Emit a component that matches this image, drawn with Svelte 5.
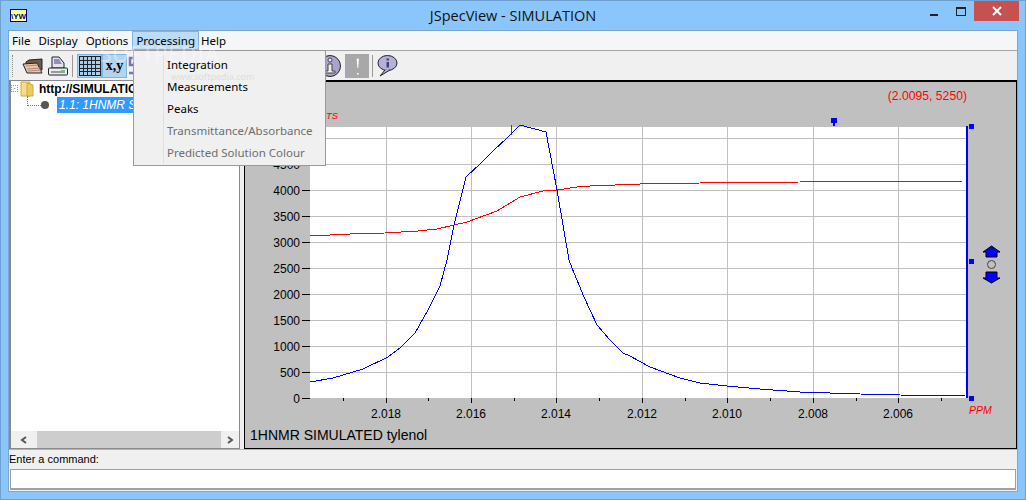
<script>
	const menus = ['File', 'Display', 'Options', 'Processing', 'Help'];
	const items = [
		{ label: 'Integration', disabled: false },
		{ label: 'Measurements', disabled: false },
		{ label: 'Peaks', disabled: false },
		{ label: 'Transmittance/Absorbance', disabled: true },
		{ label: 'Predicted Solution Colour', disabled: true }
	];

	// plot data, in window pixels
	const yTicks = [0, 500, 1000, 1500, 2000, 2500, 3000, 3500, 4000, 4500, 5000].map((v) => ({ v, y: 398 - v * 0.052 }));
	const xTicks = [
		{ x: 386, label: '2.018' },
		{ x: 471, label: '2.016' },
		{ x: 556, label: '2.014' },
		{ x: 642, label: '2.012' },
		{ x: 727, label: '2.010' },
		{ x: 813, label: '2.008' },
		{ x: 898, label: '2.006' }
	];
	const minor = [343, 428, 514, 599, 685, 770, 856, 941];

	const spectrum =
		'310,382 333,378 363,369 388,357 401,347 415,333 428,310 440,286 447,260 454,225 466,177 480,164 493,151 507,138 520,125 546,132 557,190 569,260 572,268 584,297 597,325 610,340 623,353 630,356 650,367 680,378 700,383 727,386 760,389 800,392 860,394 900,395 965,396';
	const integral =
		'310,236 350,234 385,233 418,231 437,229 467,222 497,211 520,197 543,191 557,190 577,187 590,186 640,184 700,183 800,182 965,181';
</script>

<div class="window">
	<div class="titlebar">
		<svg class="app-icon" width="17" height="13" viewBox="0 0 17 13">
			<rect x="0.5" y="0.5" width="16" height="12" fill="#ffff99" stroke="#000080" />
			<text x="8.5" y="9.5" text-anchor="middle" class="app-icon-text">\YW</text>
		</svg>
		<span class="title">JSpecView - SIMULATION</span>
		<div class="caption">
			<span class="min"></span>
			<span class="max"></span>
			<span class="close">
				<svg width="10" height="10" viewBox="0 0 10 10">
					<path d="M1 1 L9 9 M9 1 L1 9" stroke="#fff" stroke-width="2" />
				</svg>
			</span>
		</div>
	</div>

	<div class="client">
		<div class="menubar">
			{#each menus as m}
				<span class="menu" class:open={m === 'Processing'}>{m}</span>
			{/each}
		</div>

		<div class="toolbar">
			<span class="grip"></span>
			<svg class="tool" width="21" height="16" viewBox="0 0 21 16">
				<path d="M4 4 L7 2 L20 1 L20 12 L4 12 Z" fill="#6e5a4a" stroke="#222" />
				<path d="M1 6 L15 5 L20 15 L5 15 Z" fill="#e8c9b0" stroke="#222" />
				<path d="M4 8 L16 7 M5 11 L18 10 M6 13 L19 12" stroke="#b08a74" />
			</svg>
			<svg class="tool printer" width="20" height="20" viewBox="0 0 20 20">
				<path d="M4 1 L11 1 L16 7 L16 12 L4 12 Z" fill="#e4e4f0" stroke="#222" />
				<path d="M6 3 L11 3 L14 8 L6 8 Z" fill="#8f8fb8" />
				<rect x="0.5" y="12" width="19" height="7" rx="1" fill="#ececec" stroke="#222" />
				<rect x="3" y="15" width="14" height="2" fill="#999" />
				<rect x="13" y="14" width="4" height="2" fill="#6c6" />
			</svg>
			<span class="tsep"></span>
			<span class="tbtn on">
				<svg width="22" height="20" viewBox="0 0 22 20">
					<rect x="0.5" y="0.5" width="21" height="19" fill="#a9cdee" stroke="#222" />
					<path d="M4.5 0V20M8.5 0V20M12.5 0V20M16.5 0V20M0 4.5H22M0 8.5H22M0 12.5H22M0 15.5H22" stroke="#222" />
				</svg>
			</span>
			<span class="tbtn on xy">x,y</span>
			<svg class="tool peek" width="14" height="20" viewBox="0 0 14 20">
				<path d="M8 2 H2 V9 H8 V17 H1" fill="none" stroke="#7c74a8" stroke-width="2.5" />
			</svg>
			<span class="toolgap"></span>
			<svg class="tool" width="17" height="24" viewBox="0 0 17 24">
				<circle cx="5" cy="12" r="10.5" fill="#a8a4cc" stroke="#222" />
				<circle cx="5" cy="6" r="2" fill="#eee" stroke="#444" />
				<path d="M3 10 H7 V17 H10 V19 H0 V17 H3 Z" fill="#eee" stroke="#444" />
			</svg>
			<span class="tbtn grey">
				<svg width="23" height="24" viewBox="0 0 23 24">
					<path d="M10.8 6 H12.8 L12.2 14 H11.4 Z" fill="#fff" />
					<circle cx="11.8" cy="5.8" r="1.2" fill="#fff" />
					<rect x="11" y="19" width="1.6" height="1.6" fill="#fff" />
				</svg>
			</span>
			<span class="tsep"></span>
			<svg class="tool" width="21" height="22" viewBox="0 0 21 22">
				<ellipse cx="10.5" cy="8" rx="9.5" ry="7.5" fill="#b4b2d8" stroke="#222" />
				<path d="M8 15 L3 21 L13 15" fill="#b4b2d8" stroke="#222" />
				<rect x="9.5" y="7" width="2.5" height="5.5" fill="#44406c" />
				<rect x="9.5" y="3.5" width="2.5" height="2" fill="#44406c" />
			</svg>
		</div>

		<div class="split">
			<div class="tree">
				<div class="tree-body">
					<div class="node root">
						<span class="expander">-</span>
						<svg width="15" height="16" viewBox="0 0 15 16">
							<path d="M1 1 H10 V15 H1 Z" fill="#f5dd8a" stroke="#c9a94e" />
							<path d="M7 2 L13 4 V15 L7 15 Z" fill="#f0c95c" stroke="#c9a94e" />
						</svg>
						<b>http://SIMULATION/$H1_BLOCK</b>
					</div>
					<div class="node leaf">
						<span class="dots"></span>
						<span class="bullet"></span>
						<i>1.1: 1HNMR SIMULATED tylenol</i>
					</div>
				</div>
				<div class="hscroll">
					<span class="sarrow">
						<svg width="8" height="8" viewBox="0 0 8 8"><path d="M6 1 L2 4 L6 7" fill="none" stroke="#555" stroke-width="2" /></svg>
					</span>
					<span class="thumb"></span>
					<span class="sarrow right">
						<svg width="8" height="8" viewBox="0 0 8 8"><path d="M2 1 L6 4 L2 7" fill="none" stroke="#555" stroke-width="2" /></svg>
					</span>
				</div>
			</div>

			<div class="plot">
				<svg width="771" height="367" viewBox="245 82 771 367">
					<rect x="310" y="127" width="657" height="271" fill="#fff" />
					{#each yTicks as t}
						{#if t.v > 0}
							<line x1="310" x2="967" y1={t.y} y2={t.y} class="grid" />
						{/if}
						<line x1="302" x2="310" y1={t.y} y2={t.y} class="tick" />
						<text x="300" y={t.y + 4.5} text-anchor="end" class="axis">{t.v}</text>
					{/each}
					{#each xTicks as t}
						<line x1={t.x} x2={t.x} y1="127" y2="398" class="grid" />
						<line x1={t.x} x2={t.x} y1="398" y2="403" class="tick" />
						<text x={t.x} y="418" text-anchor="middle" class="axis">{t.label}</text>
					{/each}
					{#each minor as x}
						<line x1={x} x2={x} y1="398" y2="401" class="tick" />
					{/each}

					<line x1="511" x2="511" y1="125" y2="135" class="red-line" />
					<polyline points={integral} class="red-line" />
					<polyline points={spectrum} class="blue-line" />

					<rect x="966" y="126" width="2" height="272" fill="#0000ff" />
					<rect x="969" y="124" width="5" height="5" fill="#0000ff" />
					<rect x="969" y="259" width="5" height="5" fill="#0000ff" />
					<rect x="969" y="396" width="5" height="5" fill="#0000ff" />
					<rect x="831" y="118" width="6" height="5" fill="#0000ff" />
					<rect x="833" y="123" width="2" height="3" fill="#0000ff" />

					<path d="M991.5 246 L1000 252 H997 V257 H986 V252 H983 Z" fill="#0000ff" stroke="#000" />
					<circle cx="991.5" cy="264.5" r="4" fill="none" stroke="#444" />
					<path d="M986 272 H997 V278 H1000 L991.5 283 L983 278 H986 Z" fill="#0000ff" stroke="#000" />

					<text x="967" y="100" text-anchor="end" class="red-text">(2.0095, 5250)</text>
					<text x="969" y="414" class="red-unit ppm">PPM</text>
					<text x="326" y="119" class="red-unit">TS</text>
					<text x="250" y="440" class="plot-title">1HNMR SIMULATED tylenol</text>
				</svg>
			</div>
		</div>

		<div class="command">
			<div class="cmd-label">Enter a command:</div>
			<div class="cmd-input"></div>
		</div>

		<div class="dropdown">
			{#each items as item}
				<div class="item" class:disabled={item.disabled}>{item.label}</div>
			{/each}
			<span class="mark">www.softpedia.com</span>
		</div>
		<span class="softpedia">SOFTPEDIA</span>
	</div>
</div>

<style>
	:global(body) {
		margin: 0;
		overflow: hidden;
	}

	.window {
		position: relative;
		box-sizing: border-box;
		width: 1026px;
		height: 500px;
		display: flex;
		flex-direction: column;
		background: #8ac5fb;
		border: 1px solid #6f9fce;
		font-family: 'Noto Sans', 'Liberation Sans', sans-serif;
		color: #000;
	}

	.titlebar {
		position: relative;
		height: 29px;
		display: flex;
		align-items: center;
		justify-content: center;
		flex: none;
	}

	.app-icon {
		position: absolute;
		left: 9px;
		top: 8px;
	}

	.app-icon-text {
		font-family: 'Liberation Sans', sans-serif;
		font-size: 8px;
		font-weight: bold;
		fill: #000080;
	}

	.title {
		font-family: 'Open Sans', sans-serif;
		font-size: 14.5px;
		color: #111;
	}

	.caption {
		position: absolute;
		right: 6px;
		top: 0;
		display: flex;
		align-items: flex-start;
	}

	.min {
		width: 8px;
		height: 2px;
		margin: 13px 18px 0 0;
		background: #222;
	}

	.max {
		width: 8px;
		height: 6px;
		margin: 6px 8px 0 0;
		border: 1px solid #222;
		border-top-width: 2px;
	}

	.close {
		width: 45px;
		height: 20px;
		background: #c75050;
		display: flex;
		align-items: center;
		justify-content: center;
	}

	.client {
		position: relative;
		flex: 1;
		display: flex;
		flex-direction: column;
		margin: 0 7px 7px 7px;
		border: 1px solid #7ba7d0;
		background: #f0f0f0;
		min-height: 0;
	}

	.menubar {
		height: 19px;
		display: flex;
		background: #f5f6f8;
		border-bottom: 1px solid #a5a5a5;
		font-size: 11.5px;
		flex: none;
	}

	.menu {
		box-sizing: border-box;
		padding: 0 4px;
		line-height: 19px;
		height: 19px;
	}

	.menu:first-child {
		margin-left: -1px;
	}

	.menu.open {
		margin-right: -2px;
		background: #bcdcf4;
		outline: 1px solid #7fb4e0;
		outline-offset: -1px;
	}

	.toolbar {
		height: 29px;
		display: flex;
		align-items: center;
		padding-left: 3px;
		flex: none;
	}

	.grip {
		width: 1px;
		height: 22px;
		border-left: 1px dotted #888;
		margin-right: 8px;
	}

	.tool {
		flex: none;
	}

	.printer {
		margin-left: 5px;
	}

	.tsep {
		width: 1px;
		height: 22px;
		background: #999;
		margin: 0 4px;
	}

	.tbtn {
		box-sizing: border-box;
		width: 25px;
		height: 24px;
		display: flex;
		align-items: center;
		justify-content: center;
		flex: none;
	}

	.tbtn.on {
		background: #b3d4f0;
		outline: 1px solid #7fb4e0;
		outline-offset: -1px;
	}

	.xy {
		font-family: 'Liberation Serif', serif;
		font-weight: bold;
		font-size: 14px;
	}

	.peek {
		margin-left: 1px;
	}

	.toolgap {
		flex: none;
		width: 183px;
	}

	.tbtn.grey {
		width: 24px;
		background: #a8a8a8;
		margin: 0 -1px 0 3px;
	}

	.split {
		flex: 1;
		display: flex;
		gap: 4px;
		min-height: 0;
	}

	.tree {
		box-sizing: border-box;
		width: 231px;
		display: flex;
		flex-direction: column;
		border: 1px solid #8a8a8a;
		border-left-width: 2px;
		background: #fff;
		font-family: 'Liberation Sans', sans-serif;
		font-size: 12px;
	}

	.tree-body {
		flex: 1;
		overflow: hidden;
		white-space: nowrap;
	}

	.node {
		display: flex;
		align-items: center;
		height: 17px;
	}

	.node.root {
		height: 15px;
	}

	.root svg {
		margin-right: 4px;
		flex: none;
	}

	.expander {
		flex: none;
		box-sizing: border-box;
		width: 7px;
		height: 7px;
		margin-right: 2px;
		border: 1px dotted #999;
		font-size: 7px;
		line-height: 4px;
		text-align: center;
		color: #666;
	}

	.dots {
		flex: none;
		width: 13px;
		height: 9px;
		margin: -8px 0 0 16px;
		border-left: 1px dotted #777;
		border-bottom: 1px dotted #777;
	}

	.bullet {
		flex: none;
		width: 8px;
		height: 8px;
		margin: 0 8px 0 0;
		border-radius: 50%;
		background: #555;
	}

	.leaf i {
		background: #3399ff;
		color: #fff;
		font-size: 12px;
		line-height: 16px;
		padding-left: 2px;
	}

	.hscroll {
		height: 17px;
		display: flex;
		background: #f0f0f0;
		flex: none;
	}

	.sarrow {
		width: 26px;
		display: flex;
		align-items: center;
		justify-content: center;
	}

	.sarrow.right {
		width: 18px;
	}

	.thumb {
		flex: 1;
		background: #cdcdcd;
	}

	.plot {
		flex: 1;
		background: #c0c0c0;
		border: 1px solid #000;
		border-top-width: 2px;
		overflow: hidden;
		min-width: 0;
	}

	.plot svg {
		display: block;
	}

	.grid {
		stroke: #c0c0c0;
		shape-rendering: crispEdges;
	}

	.tick {
		stroke: #000;
		shape-rendering: crispEdges;
	}

	.axis {
		font-family: 'Liberation Sans', sans-serif;
		font-size: 12px;
		fill: #000;
	}

	.red-line {
		fill: none;
		stroke: #ff0000;
		shape-rendering: crispEdges;
	}

	.blue-line {
		fill: none;
		stroke: #0000ff;
		shape-rendering: crispEdges;
	}

	.red-text {
		font-family: 'Liberation Sans', sans-serif;
		font-size: 12.2px;
		fill: #ff0000;
	}

	.red-unit {
		font-family: 'Liberation Sans', sans-serif;
		font-size: 9.5px;
		font-style: italic;
		fill: #ff0000;
	}

	.red-unit.ppm {
		font-size: 10.5px;
	}

	.plot-title {
		font-family: 'Liberation Sans', sans-serif;
		font-size: 14px;
		fill: #000;
	}

	.command {
		flex: none;
		height: 41px;
		display: flex;
		flex-direction: column;
		border-top: 1px solid #b5b5b5;
	}

	.cmd-label {
		height: 19px;
		line-height: 18px;
		font-family: 'Liberation Sans', sans-serif;
		font-size: 11px;
	}

	.cmd-input {
		box-sizing: border-box;
		height: 21px;
		margin: 0 1px;
		background: #fff;
		border: 1px solid #a0a0a0;
		border-bottom-width: 2px;
	}

	.dropdown {
		position: absolute;
		left: 124px;
		top: 19px;
		box-sizing: border-box;
		width: 193px;
		height: 116px;
		padding-top: 3px;
		background: #f0f0f0;
		border: 1px solid #9a9a9a;
		font-size: 11.5px;
	}

	.dropdown::before {
		content: '';
		position: absolute;
		left: 29px;
		top: 1px;
		bottom: 1px;
		width: 1px;
		background: #e0e0e0;
	}

	.item {
		height: 22px;
		line-height: 22px;
		padding-left: 33px;
	}

	.item.disabled {
		color: #6d6d6d;
	}

	.mark {
		position: absolute;
		left: 37px;
		top: 19px;
		font-size: 9px;
		color: #000;
		opacity: 0.08;
	}

	.softpedia {
		position: absolute;
		left: 91px;
		top: 9px;
		font-size: 21px;
		letter-spacing: 1px;
		color: #fff;
		opacity: 0.35;
		pointer-events: none;
	}
</style>
